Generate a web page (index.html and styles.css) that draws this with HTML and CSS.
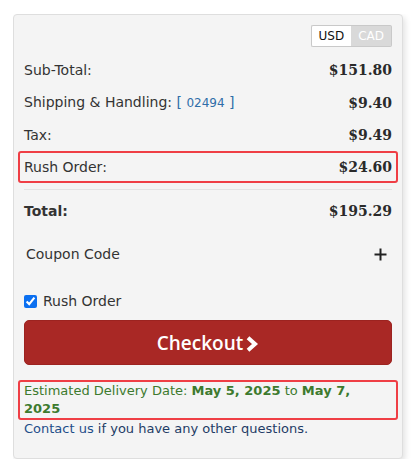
FILE: index.html
```html
<!DOCTYPE html>
<html>
<head>
<meta charset="utf-8">
<link rel="stylesheet" href="styles.css">
</head>
<body>
<div class="card">
  <div class="currency">
    <span class="cur active">USD</span><span class="cur">CAD</span>
  </div>
  <div class="row"><span>Sub-Total:</span><span class="price">$151.80</span></div>
  <div class="row"><span>Shipping &amp; Handling: <span class="zip">[ <span class="zipcode">02494</span> ]</span></span><span class="price">$9.40</span></div>
  <div class="row"><span>Tax:</span><span class="price">$9.49</span></div>
  <div class="row rush"><span>Rush Order:</span><span class="price">$24.60</span></div>
  <div class="sep"></div>
  <div class="row total"><span>Total:</span><span class="price">$195.29</span></div>
  <div class="coupon"><span>Coupon Code</span>
    <svg class="plus" width="13" height="13" viewBox="0 0 13 13"><path d="M6.5 0.5v12M0.5 6.5h12" stroke="#222" stroke-width="2"/></svg>
  </div>
  <label class="check"><input type="checkbox" checked> Rush Order</label>
  <button class="checkout">Checkout<svg class="chev" width="14" height="16" viewBox="0 0 14 16"><path d="M3 1.8l7 6.2-7 6.2" stroke="#fff" stroke-width="4" fill="none" stroke-linejoin="miter"/></svg></button>
  <div class="delivery">Estimated Delivery Date: <b>May 5, 2025</b> to <b>May 7,</b> <b>2025</b></div>
  <div class="contact"><a>Contact us</a> if you have any other questions.</div>
</div>
</body>
</html>
```
FILE: styles.css
```css
body {
  margin: 14px 0 0 13px;
  font-family: "DejaVu Sans", Verdana, sans-serif;
  color: #333;
  background: #fff;
}
.card {
  width: 368px;
  background: #f4f4f4;
  border: 1px solid #dedede;
  border-radius: 4px;
  box-shadow: 2px 3px 6px rgba(0,0,0,0.12);
  padding: 10px 10px 20px 10px;
}
.currency {
  display: flex;
  justify-content: flex-end;
  margin-bottom: 7px;
}
.currency .cur {
  font-size: 12px;
  line-height: 20px;
  padding: 0 7px;
  border: 1px solid #c9c9c9;
  background: #d9d9d9;
  color: #fff;
}
.currency .cur.active {
  background: #fff;
  color: #111;
  border-right: none;
  border-radius: 2px 0 0 2px;
}
.currency .cur:last-child {
  border-left: none;
  border-radius: 0 2px 2px 0;
}
.row {
  display: flex;
  justify-content: space-between;
  align-items: center;
  font-size: 14px;
  line-height: 18px;
  padding: 7px 0;
}
.price {
  font-family: "DejaVu Serif", Georgia, serif;
  font-weight: bold;
  color: #2a2a2a;
}
.zip { color: #2f6ea8; }
.zipcode { font-size: 12px; }
.rush {
  margin: 0 -6px;
  padding: 5px 4px;
  border: 2px solid #ef3e45;
  border-radius: 3px;
}
.sep {
  height: 1px;
  background: #e3e3e3;
  margin: 6px 0 5px;
}
.total span:first-child { font-weight: bold; }
.coupon {
  display: flex;
  justify-content: space-between;
  align-items: center;
  font-size: 14px;
  line-height: 18px;
  padding: 18px 5px 0 2px;
}
.plus { display: block; }
.check {
  display: flex;
  align-items: center;
  gap: 6px;
  font-size: 14px;
  line-height: 18px;
  margin-top: 29px;
}
.check input {
  margin: 0;
  width: 13px;
  height: 13px;
  accent-color: #0b6ff0;
}
.checkout {
  display: flex;
  justify-content: center;
  align-items: center;
  gap: 2px;
  width: 100%;
  height: 45px;
  margin-top: 10px;
  border: 1px solid #9c2320;
  border-radius: 5px;
  background: #a92825;
  color: #fff;
  font-family: "Open Sans", sans-serif;
  font-weight: 600;
  font-size: 19px;
  padding: 0;
}
.chev { display: block; margin-top: 2px; }
.delivery {
  margin: 15px -6px 0;
  padding: 0 12px 0 4px;
  border: 2px solid #ef3e45;
  border-radius: 3px;
  font-size: 13px;
  line-height: 18px;
  color: #3d7a2e;
}
.contact {
  font-size: 13px;
  line-height: 18px;
  color: #1f3c66;
}
.contact a { color: #1f4e8a; }
```
